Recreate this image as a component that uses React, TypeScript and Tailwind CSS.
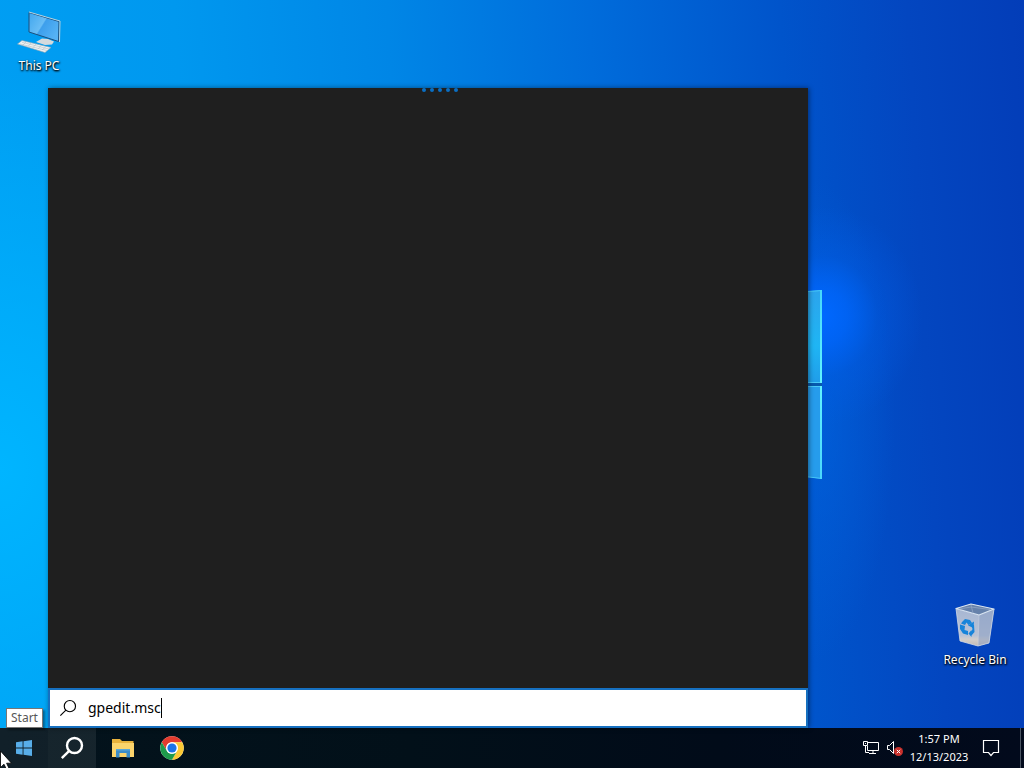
import React from 'react';

const ThisPcIcon = () => (
  <svg width="48" height="48" viewBox="0 -2 48 48" aria-hidden="true">
    <defs>
      <linearGradient id="pc-screen" x1="0" y1="0" x2="1" y2="0.6">
        <stop offset="0" stopColor="#3fa6ee" />
        <stop offset="0.5" stopColor="#69bdf5" />
        <stop offset="0.54" stopColor="#3d9fec" />
        <stop offset="1" stopColor="#55b2f5" />
      </linearGradient>
    </defs>
    <path d="M27 30.500 L33 31 L39 33.500 L37 36.500 L30 37 L21 34 Z" fill="#d5dadd" />
    <path d="M14 4.500 L44 13.500 L43.500 33.500 L14 24 Z" fill="url(#pc-screen)" stroke="#1d4f7c" strokeWidth="1" />
    <path d="M14 4 L45 13 L44.500 34" fill="none" stroke="#b9d3df" strokeWidth="1" />
    <path d="M2.500 36 L7 32.500 L36 39.500 L30 44.500 Z" fill="#f0f2f3" stroke="#8ea5b2" strokeWidth="0.6" />
    <path d="M5 36 L32 42.500 M7 34.300 L34 41 M11 34 L8 37 M16 35 L13 38.500 M21 36 L18 39.700 M26 37.500 L23 41 M31 38.500 L27 42" stroke="#b4bfc5" strokeWidth="0.6" />
  </svg>
);

const RecycleBinIcon = () => (
  <svg width="48" height="48" viewBox="0 0 48 48" aria-hidden="true">
    <defs>
      <linearGradient id="bin-body" x1="0" y1="0" x2="0" y2="1">
        <stop offset="0" stopColor="#a6b6d3" />
        <stop offset="0.72" stopColor="#b9c3d5" />
        <stop offset="0.82" stopColor="#d2cecb" />
        <stop offset="1" stopColor="#c2bbb4" />
      </linearGradient>
    </defs>
    <path d="M5 8.500 L28 15 L43 9 L38 43 L27 46 L9 41 Z" fill="url(#bin-body)" />
    <path d="M28 15 L43 9 L38 43 L27 46 Z" fill="#8b9fc2" fillOpacity="0.55" />
    <path d="M5 8.500 L20 4 L43 9 L28 15 Z" fill="#6681aa" stroke="#dce6f1" strokeWidth="1.200" strokeLinejoin="round" />
    <path d="M20 5 L22 13 M8 9 L20 7 L39 9.500" fill="none" stroke="#8fa5c4" strokeWidth="0.800" />
    <path d="M5 8.500 L9 41 L27 46 L38 43 L43 9" fill="none" stroke="#d3dae5" strokeWidth="0.8" />
    <path d="M28 15 L27 46" stroke="#c7d0df" strokeWidth="0.600" />
    <g fill="#1684da">
      <path d="M11.500 21.500 L14 19 L19 20 L21 23 L17.500 25 L15.500 22.500 L14 25 L10 23.500 Z" />
      <path d="M9 24.500 L14 26 L13.500 30 L17 31 V35 L12 33.500 L9 29 Z" />
      <path d="M20 24.500 L23 25 L23.500 32 L20.500 35.500 V37 L17.500 33.500 L20.500 30 V31.500 L21.500 29 Z" />
      <path d="M17 25.500 L23 21.500 L22.500 28 Z" />
    </g>
  </svg>
);

const ChromeIcon = () => (
  <svg width="24" height="24" viewBox="0 0 48 48" aria-hidden="true">
    <circle cx="24" cy="24" r="23.500" fill="#fff" />
    <path d="M3.600 12.300 A23.500 23.500 0 0 1 44.400 12.300 L24 12.300 A11.700 11.700 0 0 0 13.900 29.900 Z" fill="#e33b2e" />
    <path d="M44.400 12.300 A23.500 23.500 0 0 1 24 47.500 L34.100 29.900 A11.700 11.700 0 0 0 24 12.300 Z" fill="#fcc934" />
    <path d="M24 47.500 A23.500 23.500 0 0 1 3.600 12.300 L13.900 29.900 A11.700 11.700 0 0 0 34.100 29.900 Z" fill="#1e9b4b" />
    <circle cx="24" cy="24" r="11.700" fill="#fff" />
    <circle cx="24" cy="24" r="9.200" fill="#1a73e8" />
  </svg>
);

const ExplorerIcon = () => (
  <svg width="24" height="24" viewBox="0 0 24 24" aria-hidden="true">
    <path d="M1 3 H9 L11 5 H22.500 V21 H1 Z" fill="#e8b23c" />
    <path d="M1 7 H23 V21 H1 Z" fill="#fbd46c" />
    <path d="M5 13 H19 V21.500 H15.500 V17 H8.500 V21.500 H5 Z" fill="#3b8cc8" />
    <path d="M5 13 H19 V14.500 H5 Z" fill="#5aa7d8" />
  </svg>
);

const MagnifierIcon = ({ size, strokeWidth }: { size: number; strokeWidth: number }) => (
  <svg width={size} height={size} viewBox="0 0 24 24" fill="none" stroke="currentColor" strokeWidth={strokeWidth} aria-hidden="true">
    <circle cx="14.500" cy="9.500" r="7.500" />
    <path d="M9.200 14.800 L1.800 22.200" />
  </svg>
);

// Right edge of the lit window in the wallpaper, plus the glow around it
const Wallpaper = () => (
  <div className="absolute inset-0 overflow-hidden bg-[linear-gradient(87deg,#009ff3_0%,#0098ef_20%,#0086e6_40%,#006cdb_59%,#0054cb_77%,#0346c0_89%,#033db8_100%)]">
    <div className="absolute inset-0 bg-[radial-gradient(ellipse_300px_400px_at_0px_470px,#00b5ff_0%,transparent_100%)]" />
    <div className="absolute inset-0 bg-[radial-gradient(ellipse_80px_240px_at_815px_420px,#0062deb3_0%,transparent_100%)]" />
    <div className="absolute inset-0 bg-[radial-gradient(ellipse_100px_110px_at_822px_316px,#0068ff_0%,#0066fccc_25%,#0060ee55_55%,transparent_100%)]" />
    <svg className="absolute left-[800px] top-[288px]" width="24" height="194" viewBox="0 0 24 194" aria-hidden="true">
      <defs>
        <linearGradient id="pane-top" x1="0" y1="0" x2="0" y2="1">
          <stop offset="0" stopColor="#2ca4ec" />
          <stop offset="0.6" stopColor="#1fb5f4" />
          <stop offset="1" stopColor="#209de9" />
        </linearGradient>
        <linearGradient id="pane-edge" x1="0" y1="0" x2="0" y2="1">
          <stop offset="0" stopColor="#45d8fb" />
          <stop offset="0.5" stopColor="#62f4ff" />
          <stop offset="1" stopColor="#4ad7fc" />
        </linearGradient>
      </defs>
      <path d="M0 4 L22 2 V95 H0 Z" fill="url(#pane-top)" />
      <path d="M0 98 H22 V191 L0 188 Z" fill="#269cec" />
      <path d="M0 4 L22 2.500 M0 94.500 H22 M0 98.500 H22 M0 188 L22 190.500" stroke="#48c9f8" />
      <path d="M0 96.500 H22" stroke="#0759ad" strokeWidth="3" />
      <path d="M20 2 H22 V95 H20 Z M20 98 H22 V191 H20 Z" fill="url(#pane-edge)" />
    </svg>
  </div>
);

const DesktopIcon = ({ label, children }: { label: string; children: React.ReactNode }) => (
  <button type="button" className="flex w-[78px] flex-col items-center text-[12px] leading-4 text-white [text-shadow:1px_1px_2px_#000,0_1px_2px_#000]">
    {children}
    <span className="mt-1 whitespace-nowrap">{label}</span>
  </button>
);

const SearchWindow = () => {
  const [query, setQuery] = React.useState('gpedit.msc');

  return (
    <section aria-label="Search" className="absolute bottom-0 left-12 top-[88px] flex w-[760px] max-w-full flex-col bg-[#1f1f1f] shadow-[1px_0_5px_rgba(0,0,0,0.45)]">
      <div className="flex h-1 items-center justify-center gap-1 pl-6">
        {[0, 1, 2, 3, 4].map((dot) => (
          <span key={dot} className="size-1 rounded-full bg-[#0a6fc4]" />
        ))}
      </div>
      <div className="flex-1" />
      <label className="flex h-10 items-center gap-[11px] border-2 border-[#1670c0] bg-white px-[9px] text-black">
        <MagnifierIcon size={18} strokeWidth={1.5} />
        <span className="flex flex-1 items-center">
          <input
            type="text"
            aria-label="Type here to search"
            value={query}
            onChange={(e) => setQuery(e.target.value)}
            className="field-sizing-content bg-transparent text-[14px] leading-5 outline-none"
          />
          <span className="h-5 w-px bg-black" />
        </span>
      </label>
    </section>
  );
};

const Taskbar = () => (
  <footer className="flex h-10 shrink-0 items-stretch bg-[linear-gradient(90deg,#03131c_0%,#021019_40%,#010b19_70%,#020a1c_100%)] text-white">
    <button type="button" aria-label="Start" className="flex w-12 items-center justify-center bg-white/6 text-[#58aee9]">
      <svg width="16" height="16" viewBox="0 0 16 16" fill="currentColor" aria-hidden="true">
        <path d="M0 2.300 L6.600 1.300 V7.500 H0 Z M7.500 1.200 L16 0 V7.500 H7.500 Z M0 8.500 H6.600 V14.700 L0 13.700 Z M7.500 8.500 H16 V16 L7.500 14.800 Z" />
      </svg>
    </button>
    <button type="button" aria-label="Search" className="flex w-12 items-center justify-center bg-white/8">
      <MagnifierIcon size={24} strokeWidth={2.4} />
    </button>
    <div className="flex items-center gap-[25px] pl-[15px]">
      <button type="button" aria-label="File Explorer"><ExplorerIcon /></button>
      <button type="button" aria-label="Google Chrome"><ChromeIcon /></button>
    </div>

    {/* System tray */}
    <div className="ml-auto flex items-center">
      <button type="button" aria-label="Network" className="mr-2">
        <svg width="16" height="16" viewBox="0 0 16 16" fill="none" stroke="currentColor" aria-hidden="true">
          <path d="M5 2.500 H15.500 V10.500 H4.500 V6 M10 10.500 V13 M6 13.500 H13" />
          <path d="M0.500 1.500 H4.500 V5.500 H0.500 Z M2.500 5.500 V12.500 H6" />
          <path d="M2 3.500 H3" />
        </svg>
      </button>
      <button type="button" aria-label="Volume" className="mr-2">
        <svg width="16" height="16" viewBox="0 0 16 16" fill="none" aria-hidden="true">
          <path d="M0.500 5.500 H2.500 L6.500 1.500 V13.500 L2.500 9.500 H0.500 Z" stroke="#fff" />
          <circle cx="11.500" cy="11.500" r="4.500" fill="#c9302c" />
          <path d="M9.800 9.800 L13.200 13.200 M13.200 9.800 L9.800 13.200" stroke="#fff" />
        </svg>
      </button>
      <button type="button" className="w-14 whitespace-nowrap text-center text-[11px] leading-[18px]">
        <span className="flex flex-col items-center">
          <span>1:57 PM</span>
          <span>12/13/2023</span>
        </span>
      </button>
      <button type="button" aria-label="Notifications" className="ml-[15px] mr-5">
        <svg width="18" height="18" viewBox="0 0 18 18" fill="none" stroke="currentColor" strokeWidth="1.200" aria-hidden="true">
          <path d="M1.500 1.500 H16.500 V13.500 H11.500 L9 16.500 L6.500 13.500 H1.500 Z" />
        </svg>
      </button>
      <button type="button" aria-label="Show desktop" className="h-full w-1 border-l border-[#4b5563]" />
    </div>
  </footer>
);

export default function App() {
  return (
    <div className="relative flex h-screen flex-col overflow-hidden font-['Noto_Sans','Open_Sans',sans-serif]">
      <main className="relative flex-1">
        <Wallpaper />
        <div className="absolute left-0 top-[6px]">
          <DesktopIcon label="This PC"><ThisPcIcon /></DesktopIcon>
        </div>
        <div className="absolute bottom-[60px] right-[10px]">
          <DesktopIcon label="Recycle Bin"><RecycleBinIcon /></DesktopIcon>
        </div>
        <SearchWindow />
        <div role="tooltip" className="absolute bottom-0 left-[6px] flex h-5 items-center border border-[#767676] bg-white px-1 text-[12px] leading-4 text-[#575757] shadow-[2px_2px_2px_rgba(0,0,0,0.4)]">
          Start
        </div>
      </main>
      <Taskbar />
      <svg className="pointer-events-none absolute bottom-0 left-0" width="12" height="18" viewBox="0 0 12 18" aria-hidden="true">
        <path d="M0.500 1 V17.500 L4 14.200 L6.500 19.500 L9 18.300 L6.600 13.200 H11.500 Z" fill="#fff" stroke="#000" strokeWidth="0.800" />
      </svg>
    </div>
  );
}
